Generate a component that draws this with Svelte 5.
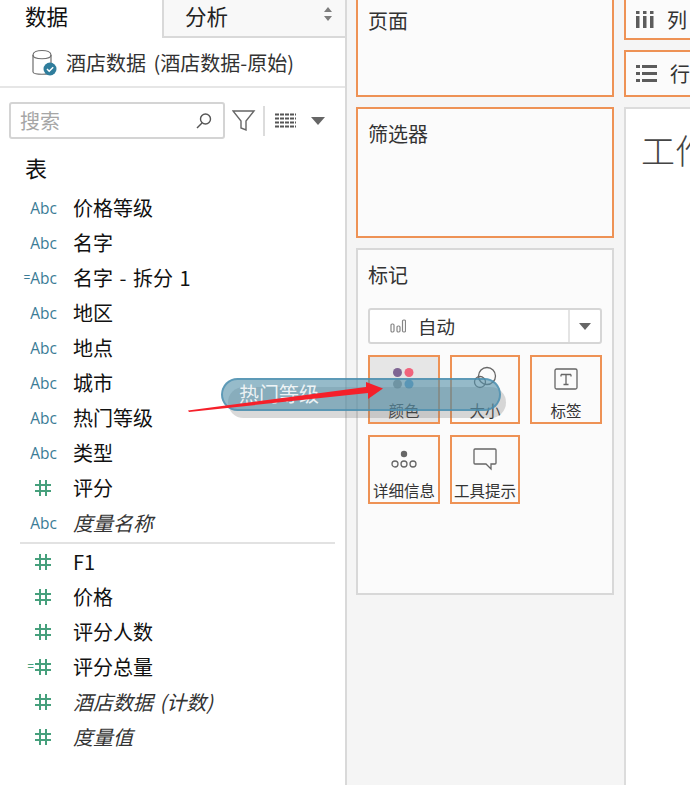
<script>
  const dims = [
    { type: 'abc', name: '价格等级' },
    { type: 'abc', name: '名字' },
    { type: 'abc', name: '名字 - 拆分 1', calc: true },
    { type: 'abc', name: '地区' },
    { type: 'abc', name: '地点' },
    { type: 'abc', name: '城市' },
    { type: 'abc', name: '热门等级' },
    { type: 'abc', name: '类型' },
    { type: 'num', name: '评分' },
    { type: 'abc', name: '度量名称', gen: true }
  ];
  const measures = [
    { type: 'num', name: 'F1' },
    { type: 'num', name: '价格' },
    { type: 'num', name: '评分人数' },
    { type: 'num', name: '评分总量', calc: true },
    { type: 'num', name: '酒店数据 (计数)', gen: true },
    { type: 'num', name: '度量值', gen: true }
  ];
</script>

{#snippet field(f)}
  <div class="field" class:gen={f.gen}>
    <span class="type {f.type}">
      {#if f.calc}<span class="eq">=</span>{/if}
      {#if f.type === 'abc'}
        Abc
      {:else}
        <svg width="18" height="18" viewBox="0 0 18 18" fill="none" stroke="#46a07c" stroke-width="2">
          <path d="M6 1v16M12 1v16M1 6h16M1 12h16" />
        </svg>
      {/if}
    </span>
    <span class="fname">{f.name}</span>
  </div>
{/snippet}

<div class="page">
  <aside class="data-pane">
    <div class="tabs">
      <div class="tab active">数据</div>
      <div class="tab other">
        分析
        <svg class="updown" width="10" height="14" viewBox="0 0 10 14" fill="#7d7d7d"><path d="M5 0l4 5H1zM5 14l4-5H1z" /></svg>
      </div>
    </div>
    <div class="source">
      <svg width="28" height="28" viewBox="0 0 28 28" fill="none">
        <path d="M2 6c0-6 18-6 18 0v17c0 3-18 3-18 0z" stroke="#6e6e6e" stroke-width="1.2" />
        <path d="M2 6c0 5 18 5 18 0" stroke="#6e6e6e" stroke-width="1.2" />
        <circle cx="19" cy="20" r="6.5" fill="#2f7d9c" />
        <path d="M16 20l2.2 2.2 4-4" stroke="#fff" stroke-width="1.5" />
      </svg>
      <span>酒店数据 (酒店数据-原始)</span>
    </div>
    <div class="tools">
      <div class="search">
        <span>搜索</span>
        <svg width="18" height="18" viewBox="0 0 18 18" fill="none" stroke="#555" stroke-width="1.4">
          <circle cx="10.5" cy="7" r="5" /><path d="M7 11l-5 5" />
        </svg>
      </div>
      <svg class="funnel" width="24" height="22" viewBox="0 0 24 22" fill="none" stroke="#666" stroke-width="1.4">
        <path d="M1 1h21l-8 10v9l-5-2v-7z" />
      </svg>
      <span class="sep"></span>
      <svg width="21" height="16" viewBox="0 0 21 16" fill="none" stroke="#555" stroke-width="2">
        <path d="M0 1.500h4M5 1.500h16M0 5.500h4M5 5.500h16M0 9.500h4M5 9.500h16M0 13.500h4M5 13.500h16" stroke-dasharray="4 1" />
      </svg>
      <svg class="caret" width="14" height="8" viewBox="0 0 14 8" fill="#666"><path d="M0 0h14L7 8z" /></svg>
    </div>
    <div class="section">表</div>
    <div class="list">
      {#each dims as f}
        {@render field(f)}
      {/each}
    </div>
    <div class="divider"></div>
    <div class="list">
      {#each measures as f}
        {@render field(f)}
      {/each}
    </div>
  </aside>

  <div class="cards">
    <section class="card pages top"><h3>页面</h3></section>
    <section class="card filters"><h3>筛选器</h3></section>
    <section class="card marks">
      <h3>标记</h3>
      <div class="dropdown">
        <div class="dd-main">
          <svg width="16" height="14" viewBox="0 0 16 14" fill="none" stroke="#858585" stroke-width="1.2">
            <rect x="1" y="5" width="3" height="8" rx="1.2" /><rect x="7" y="7" width="3" height="6" rx="1.2" /><rect x="12.5" y="1" width="3" height="12" rx="1.2" />
          </svg>
          <span>自动</span>
        </div>
        <div class="dd-btn"><svg width="12" height="7" viewBox="0 0 12 7" fill="#666"><path d="M0 0h12L6 7z" /></svg></div>
      </div>
      <div class="mark-grid">
        <div class="mark hot">
          <svg width="26" height="26" viewBox="0 0 26 26">
            <circle cx="6.5" cy="6.5" r="4.5" fill="#7f6593" /><circle cx="18" cy="6.5" r="4.5" fill="#f1647c" />
            <circle cx="6.5" cy="18" r="4.5" fill="#9a9a9a" /><circle cx="18" cy="18" r="4.5" fill="#5f9fcb" />
          </svg>
          <span>颜色</span>
        </div>
        <div class="mark">
          <svg width="26" height="26" viewBox="0 0 26 26" fill="none" stroke="#666" stroke-width="1.3">
            <circle cx="15" cy="10" r="8.5" /><circle cx="8" cy="16" r="5.5" />
          </svg>
          <span>大小</span>
        </div>
        <div class="mark">
          <svg width="26" height="26" viewBox="0 0 26 26" fill="none" stroke="#666" stroke-width="1.3">
            <rect x="2" y="3" width="22" height="20" rx="1.5" />
            <path d="M8 8.500h10M13 8.500v10M10.500 18.500h5M8 8.500v2M18 8.500v2" />
          </svg>
          <span>标签</span>
        </div>
        <div class="mark">
          <svg width="28" height="26" viewBox="0 0 28 26" fill="none" stroke="#666" stroke-width="1.3">
            <circle cx="14" cy="8" r="3.200" fill="#666" stroke="none" />
            <circle cx="5" cy="18" r="3" /><circle cx="14" cy="18" r="3" /><circle cx="23" cy="18" r="3" />
          </svg>
          <span>详细信息</span>
        </div>
        <div class="mark">
          <svg width="26" height="26" viewBox="0 0 26 26" fill="none" stroke="#666" stroke-width="1.3">
            <path d="M3 3h20a1 1 0 0 1 1 1v13a1 1 0 0 1-1 1h-4v5l-5-5H3a1 1 0 0 1-1-1V4a1 1 0 0 1 1-1z" />
          </svg>
          <span>工具提示</span>
        </div>
      </div>
    </section>
  </div>

  <div class="view">
    <div class="shelf columns top">
      <svg width="18" height="17" viewBox="0 0 18 17" fill="#5c5c5c">
        <rect x="0" y="0" width="3.500" height="3" /><rect x="7" y="0" width="3.500" height="3" /><rect x="14" y="0" width="3.500" height="3" />
        <rect x="0" y="5" width="3.500" height="12" /><rect x="7" y="5" width="3.500" height="12" /><rect x="14" y="5" width="3.500" height="12" />
      </svg>
      <span>列</span>
    </div>
    <div class="shelf rows">
      <svg width="21" height="17" viewBox="0 0 21 17" fill="#5c5c5c">
        <rect x="0" y="0" width="4" height="3" /><rect x="6" y="0" width="15" height="3" />
        <rect x="0" y="7" width="4" height="3" /><rect x="6" y="7" width="15" height="3" />
        <rect x="0" y="14" width="4" height="3" /><rect x="6" y="14" width="15" height="3" />
      </svg>
      <span>行</span>
    </div>
    <div class="canvas"><div class="sheet-title">工作表 1</div></div>
  </div>

  <!-- dragged pill and the red annotation arrow lie over the panes -->
  <div class="drag-shadow"></div>
  <div class="drag-pill">热门等级</div>
  <svg class="arrow" width="200" height="32" viewBox="0 0 200 32">
    <path d="M0 29.500L178 6 178 1 195 7.500 180 18 180 12 1 31z" fill="#f5202a" />
  </svg>
</div>

<style>
  :global(body) {
    margin: 0;
    background: #fff;
  }
  .page {
    position: relative;
    width: 690px;
    height: 785px;
    overflow: hidden;
    display: flex;
    background: #f5f5f5;
    font-family: "Noto Sans CJK SC", "Open Sans", sans-serif;
    color: #222;
  }
  .data-pane {
    flex: none;
    box-sizing: border-box;
    background: #fff;
    border-right: 2px solid #d9d9d9;
    width: 347px;
  }
  .tabs {
    display: flex;
    height: 38px;
  }
  .tab {
    font-size: 21.500px;
    line-height: 31px;
    box-sizing: border-box;
  }
  .tab.active {
    width: 162px;
    padding-left: 25px;
    color: #111;
  }
  .tab.other {
    flex: 1;
    position: relative;
    padding-left: 21px;
    background: #f8f8f8;
    border-left: 2px solid #d9d9d9;
    border-bottom: 2px solid #d9d9d9;
  }
  .updown {
    position: absolute;
    right: 12px;
    top: 7px;
  }
  .source {
    display: flex;
    align-items: center;
    gap: 7px;
    height: 47px;
    padding: 1px 0 0 31px;
    border-bottom: 2px solid #e6e6e6;
    font-size: 20px;
    word-spacing: 3px;
    color: #333;
  }
  .tools {
    display: flex;
    align-items: center;
    height: 37px;
    margin-top: 14px;
    padding-left: 9px;
  }
  .search {
    width: 216px;
    height: 37px;
    box-sizing: border-box;
    border: 2px solid #d4d4d4;
    border-radius: 3px;
    display: flex;
    align-items: center;
    justify-content: space-between;
    padding: 0 10px 0 9px;
    font-size: 20px;
    color: #a6a6a6;
  }
  .funnel {
    margin-left: 7px;
  }
  .sep {
    width: 2px;
    height: 30px;
    background: #dcdcdc;
    margin: 0 10px 0 7px;
  }
  .caret {
    margin-left: 15px;
  }
  .section {
    font-size: 22px;
    line-height: 26px;
    height: 30px;
    margin-top: 15px;
    padding-left: 25px;
    color: #111;
  }
  .list {
    padding-top: 6px;
  }
  .field {
    display: flex;
    align-items: center;
    height: 35px;
    font-size: 20px;
    word-spacing: 2px;
    color: #111;
  }
  .type {
    width: 57px;
    flex: none;
    margin-right: 16px;
    display: flex;
    justify-content: flex-end;
    align-items: center;
    font-family: "Open Sans", sans-serif;
    font-size: 15.500px;
    color: #3b7c96;
  }
  .type.num {
    padding-right: 5px;
    box-sizing: border-box;
    color: #46a07c;
  }
  .eq {
    font-size: 12px;
  }
  .gen .fname {
    font-style: italic;
    color: #333;
  }
  .divider {
    height: 2px;
    margin: 2px 10px -2px 20px;
    background: #e2e2e2;
  }
  .divider + .list {
    padding-top: 2px;
  }
  .cards {
    width: 258px;
    flex: none;
    margin-left: 9px;
    display: flex;
    flex-direction: column;
    gap: 10px;
  }
  .card {
    box-sizing: border-box;
    background: #fbfbfb;
    border: 2px solid #ee9255;
    padding: 0 10px;
  }
  .card.top {
    border-top: none;
  }
  .card h3 {
    margin: 0;
    font-size: 20px;
    font-weight: 400;
    line-height: 30px;
    color: #333;
  }
  .pages {
    height: 97px;
    padding-top: 6px;
  }
  .filters {
    height: 131px;
    padding-top: 10px;
  }
  .marks {
    height: 347px;
    border-color: #d8d8d8;
    padding-top: 10px;
  }
  .dropdown {
    display: flex;
    height: 36px;
    margin-top: 18px;
    box-sizing: border-box;
    border: 2px solid #d6d6d6;
    border-radius: 3px;
    background: #fff;
  }
  .dd-main {
    flex: 1;
    display: flex;
    align-items: center;
    gap: 12px;
    padding-left: 20px;
    font-size: 18.500px;
    color: #333;
  }
  .dd-btn {
    width: 30px;
    border-left: 2px solid #e4e4e4;
    display: flex;
    align-items: center;
    justify-content: center;
  }
  .mark-grid {
    display: grid;
    grid-template-columns: 72px 70px 72px;
    grid-auto-rows: 69px;
    column-gap: 10px;
    row-gap: 11px;
    margin-top: 11px;
  }
  .mark {
    box-sizing: border-box;
    border: 2px solid #ee9255;
    display: flex;
    flex-direction: column;
    align-items: center;
    padding-top: 9px;
    font-size: 15.500px;
    line-height: 20px;
    color: #333;
  }
  .mark span {
    margin-top: 8px;
    white-space: nowrap;
  }
  .mark.hot {
    background: #e6e6e6;
  }
  .view {
    flex: 1;
    margin-left: 10px;
    min-width: 0;
    display: flex;
    flex-direction: column;
    gap: 10px;
  }
  .shelf {
    box-sizing: border-box;
    border: 2px solid #ee9255;
    border-right: none;
    background: #fbfbfb;
    display: flex;
    align-items: center;
    gap: 13px;
    padding-left: 10px;
    font-size: 20px;
    color: #333;
    overflow: hidden;
    white-space: nowrap;
  }
  .shelf.top {
    height: 40px;
    border-top: none;
  }
  .shelf.rows {
    height: 47px;
  }
  .canvas {
    flex: 1;
    box-sizing: border-box;
    background: #fff;
    border: 2px solid #dcdcdc;
    border-right: none;
    border-bottom: none;
    padding: 18px 0 0 15px;
    overflow: hidden;
  }
  .sheet-title {
    font-family: "Noto Sans CJK SC", sans-serif;
    font-size: 34px;
    font-weight: 300;
    line-height: 46px;
    white-space: nowrap;
    color: #444;
  }
  .drag-shadow {
    position: absolute;
    left: 228px;
    top: 387px;
    width: 278px;
    height: 31px;
    border-radius: 16px;
    background: rgba(120, 120, 120, 0.28);
  }
  .drag-pill {
    position: absolute;
    left: 221px;
    top: 378px;
    width: 280px;
    height: 33px;
    box-sizing: border-box;
    border-radius: 17px;
    border: 2px solid rgba(70, 140, 175, 0.7);
    background: rgba(85, 145, 170, 0.62);
    padding-left: 16px;
    font-size: 20px;
    line-height: 27px;
    color: rgba(255, 255, 255, 0.85);
  }
  .arrow {
    position: absolute;
    left: 188px;
    top: 381px;
  }
</style>
